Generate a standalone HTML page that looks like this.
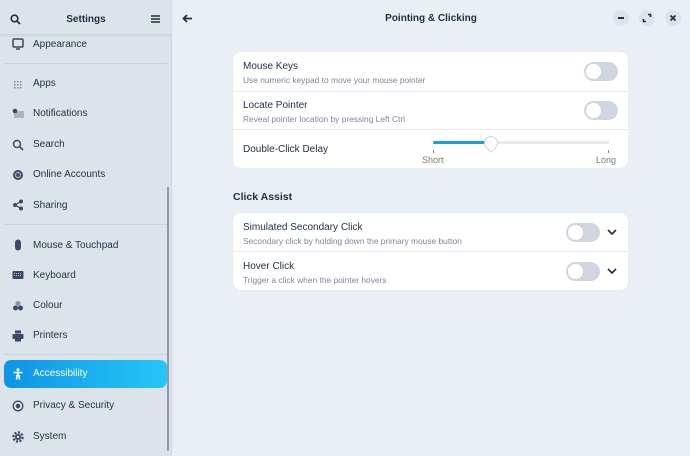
<!DOCTYPE html>
<html><head><style>
*{margin:0;padding:0;box-sizing:border-box}
body{width:690px;height:456px;overflow:hidden;font-family:"Liberation Sans",sans-serif;background:#eaeff6;position:relative;color:#1f2d45}
.side{position:absolute;left:0;top:0;width:172px;height:456px;background:#dce3ea;border-right:1px solid #cfd7e0}
.hdr{position:absolute;left:0;top:0;width:172px;height:35px;background:#dce3ea;border-bottom:1px solid #c8d0da;box-shadow:0 1px 2px rgba(0,0,0,.06);z-index:2}
.it{position:absolute;left:33px;font-size:10px;color:#23324c;margin-top:2px}
.ic{position:absolute;left:12px;width:12px;height:12px;color:#3b4a63;margin-top:2px}
.sep{position:absolute;left:4px;width:163px;height:1px;background:#cbd3dd}
.card{position:absolute;left:233px;width:395px;background:#fff;border-radius:8px;box-shadow:0 0 1px rgba(0,0,0,.1)}
.row{position:absolute;left:0;width:395px;border-top:1px solid #e6ebf1}
.t{position:absolute;left:10px;font-size:10px;color:#1f2d45;margin-top:1px}
.s{position:absolute;left:10px;font-size:8.4px;color:#7c879a;margin-top:1px}
.tg{position:absolute;width:34px;height:19px;border-radius:10px;background:#cfd6df}
.tg:after{content:"";position:absolute;left:2px;top:2px;width:15px;height:15px;border-radius:50%;background:#fff}
.wb{position:absolute;top:10px;width:16px;height:16px;border-radius:50%;background:#dce3ea}
</style></head><body>
<div class="side">
<div class="hdr">
<svg style="position:absolute;left:10px;top:14px" width="11" height="11" viewBox="0 0 11 11"><circle cx="4.5" cy="4.5" r="3.3" fill="none" stroke="#1f2d45" stroke-width="1.6"/><path d="M7 7L10 10" stroke="#1f2d45" stroke-width="1.8"/></svg>
<div style="position:absolute;left:0;width:172px;top:14px;text-align:center;font-size:10px;font-weight:bold">Settings</div>
<svg style="position:absolute;left:151px;top:15px" width="9" height="8"><path d="M0 1h9M0 4h9M0 7h9" stroke="#1f2d45" stroke-width="1.5"/></svg>
</div>
<svg class="ic" style="top:36px" viewBox="0 0 12 12"><rect x="1" y="1" width="10" height="8" rx="1" fill="none" stroke="#3b4a63" stroke-width="1.5"/><path d="M4 11h4" stroke="#3b4a63" stroke-width="1.5"/></svg>
<div class="it" style="top:37px">Appearance</div>
<div class="sep" style="top:63px"></div>
<svg class="ic" style="top:77px" viewBox="0 0 12 12" fill="#7a869a"><g><rect x="2" y="2" width="1.5" height="1.5"/><rect x="5" y="2" width="1.5" height="1.5"/><rect x="8" y="2" width="1.5" height="1.5"/><rect x="2" y="5" width="1.5" height="1.5"/><rect x="5" y="5" width="1.5" height="1.5"/><rect x="8" y="5" width="1.5" height="1.5"/><rect x="2" y="8" width="1.5" height="1.5"/><rect x="5" y="8" width="1.5" height="1.5"/><rect x="8" y="8" width="1.5" height="1.5"/></g></svg>
<div class="it" style="top:76px">Apps</div>
<svg class="ic" style="top:106px" viewBox="0 0 12 12"><rect x="2" y="3" width="10" height="7" fill="#aab4c2"/><circle cx="3" cy="3" r="2.3" fill="#3b4a63"/></svg>
<div class="it" style="top:106px">Notifications</div>
<svg class="ic" style="top:137px" viewBox="0 0 12 12"><circle cx="5" cy="5" r="3.5" fill="none" stroke="#3b4a63" stroke-width="1.5"/><path d="M7.5 7.5L11 11" stroke="#3b4a63" stroke-width="1.6"/></svg>
<div class="it" style="top:137px">Search</div>
<svg class="ic" style="top:167px" viewBox="0 0 12 12"><circle cx="6" cy="6" r="5" fill="#3b4a63"/><circle cx="6" cy="6" r="2.5" fill="none" stroke="#aab4c2" stroke-width="1.2"/></svg>
<div class="it" style="top:167px">Online Accounts</div>
<svg class="ic" style="top:197px" viewBox="0 0 12 12"><circle cx="9" cy="2.5" r="2" fill="#3b4a63"/><circle cx="3" cy="6" r="2" fill="#3b4a63"/><circle cx="9" cy="9.5" r="2" fill="#3b4a63"/><path d="M9 2.5L3 6L9 9.5" stroke="#3b4a63" stroke-width="1.2" fill="none"/></svg>
<div class="it" style="top:198px">Sharing</div>
<div class="sep" style="top:224px"></div>
<svg class="ic" style="top:237px" viewBox="0 0 12 12"><rect x="3" y="0.5" width="6" height="11" rx="3" fill="#3b4a63"/></svg>
<div class="it" style="top:238px">Mouse &amp; Touchpad</div>
<svg class="ic" style="top:267px" viewBox="0 0 12 12"><rect x="0.5" y="2" width="11" height="8" rx="1" fill="#3b4a63"/><path d="M2 4.5h8M2 6.5h8" stroke="#dce3ea" stroke-width=".8" stroke-dasharray="1 1"/></svg>
<div class="it" style="top:268px">Keyboard</div>
<svg class="ic" style="top:298px" viewBox="0 0 12 12"><circle cx="6" cy="3.5" r="2.5" fill="#8894a6"/><circle cx="3.5" cy="8" r="2.5" fill="#3b4a63"/><circle cx="8.5" cy="8" r="2.5" fill="#3b4a63"/></svg>
<div class="it" style="top:298px">Colour</div>
<svg class="ic" style="top:328px" viewBox="0 0 12 12"><rect x="3" y="0.5" width="6" height="3" fill="#3b4a63"/><rect x="0.5" y="4" width="11" height="5" rx="1" fill="#3b4a63"/><rect x="3" y="8" width="6" height="3.5" fill="#3b4a63"/></svg>
<div class="it" style="top:328px">Printers</div>
<div class="sep" style="top:354px"></div>
<div style="position:absolute;left:4px;top:360px;width:163px;height:28px;border-radius:7px;background:linear-gradient(90deg,#0f94e6,#26c6f8)"></div>
<svg class="ic" style="top:366px" viewBox="0 0 12 12"><circle cx="6" cy="1.8" r="1.5" fill="#fff"/><path d="M1.5 4.5h9M6 4v4M4.5 11.5L5 7.5h2L7.5 11.5" stroke="#fff" stroke-width="1.6" fill="none"/></svg>
<div class="it" style="top:366px;color:#fff">Accessibility</div>
<svg class="ic" style="top:398px" viewBox="0 0 12 12"><circle cx="6" cy="6" r="4.8" fill="none" stroke="#3b4a63" stroke-width="1.3"/><circle cx="6" cy="6" r="2.3" fill="#3b4a63"/></svg>
<div class="it" style="top:398px">Privacy &amp; Security</div>
<svg class="ic" style="top:429px" viewBox="0 0 12 12"><circle cx="6" cy="6" r="4.5" fill="none" stroke="#3b4a63" stroke-width="2.5" stroke-dasharray="2 1.5"/><circle cx="6" cy="6" r="3" fill="#3b4a63"/><circle cx="6" cy="6" r="1.2" fill="#dce3ea"/></svg>
<div class="it" style="top:429px">System</div>
<div style="position:absolute;left:167px;top:187px;width:2px;height:264px;background:#8d99aa;border-radius:1px"></div>
</div>

<svg style="position:absolute;left:182px;top:14px" width="11" height="9" viewBox="0 0 11 9"><path d="M10 4.5H2M5 1L1.5 4.5L5 8" stroke="#1f2d45" stroke-width="1.7" fill="none"/></svg>
<div style="position:absolute;left:172px;width:518px;top:13px;text-align:center;font-size:10px;font-weight:bold">Pointing &amp; Clicking</div>
<div class="wb" style="left:613px"><div style="position:absolute;left:5px;top:7px;width:6px;height:2px;background:#1f2d45"></div></div>
<div class="wb" style="left:639px"><svg width="16" height="16"><path d="M9 4.5h2.5V7M7 11.5H4.5V9" stroke="#1f2d45" stroke-width="1.6" fill="none"/></svg></div>
<div class="wb" style="left:665px"><svg width="16" height="16"><path d="M5.5 5.5l5 5M10.5 5.5l-5 5" stroke="#1f2d45" stroke-width="1.7"/></svg></div>

<div class="card" style="top:52px;height:116px">
<div class="t" style="top:8px">Mouse Keys</div>
<div class="s" style="top:22px">Use numeric keypad to move your mouse pointer</div>
<div class="tg" style="left:351px;top:10px"></div>
<div class="row" style="top:39px;height:39px">
<div class="t" style="top:7px">Locate Pointer</div>
<div class="s" style="top:21px">Reveal pointer location by pressing Left Ctrl</div>
<div class="tg" style="left:351px;top:9px"></div>
</div>
<div class="row" style="top:77px;height:39px">
<div class="t" style="top:13px">Double-Click Delay</div>
<div style="position:absolute;left:200px;top:11px;width:176px;height:3px;background:#e5e9ee;border-radius:2px"></div>
<div style="position:absolute;left:200px;top:11px;width:58px;height:3px;background:#1a9ae8;border-radius:2px"></div>
<div style="position:absolute;left:251px;top:6px;width:14px;height:14px;background:#fff;border:1px solid #cdd4dd;border-radius:50% 50% 50% 0;transform:rotate(-45deg)"></div>
<div style="position:absolute;left:200px;top:20px;width:1px;height:3px;background:#888"></div>
<div style="position:absolute;left:375px;top:20px;width:1px;height:3px;background:#888"></div>
<div style="position:absolute;left:189px;top:25px;font-size:9px;color:#6e7a8d">Short</div>
<div style="position:absolute;left:363px;top:25px;font-size:9px;color:#6e7a8d">Long</div>
</div>
</div>

<div style="position:absolute;left:233px;top:191px;font-size:10.5px;font-weight:bold">Click Assist</div>
<div class="card" style="top:213px;height:77px">
<div class="t" style="top:8px">Simulated Secondary Click</div>
<div class="s" style="top:22px">Secondary click by holding down the primary mouse button</div>
<div class="tg" style="left:333px;top:10px"></div>
<svg style="position:absolute;left:374px;top:16px" width="10" height="7"><path d="M1 1l4 4 4-4" stroke="#1f2d45" stroke-width="1.6" fill="none"/></svg>
<div class="row" style="top:38px;height:39px">
<div class="t" style="top:8px">Hover Click</div>
<div class="s" style="top:22px">Trigger a click when the pointer hovers</div>
<div class="tg" style="left:333px;top:10px"></div>
<svg style="position:absolute;left:374px;top:16px" width="10" height="7"><path d="M1 1l4 4 4-4" stroke="#1f2d45" stroke-width="1.6" fill="none"/></svg>
</div>
</div>
</body></html>
